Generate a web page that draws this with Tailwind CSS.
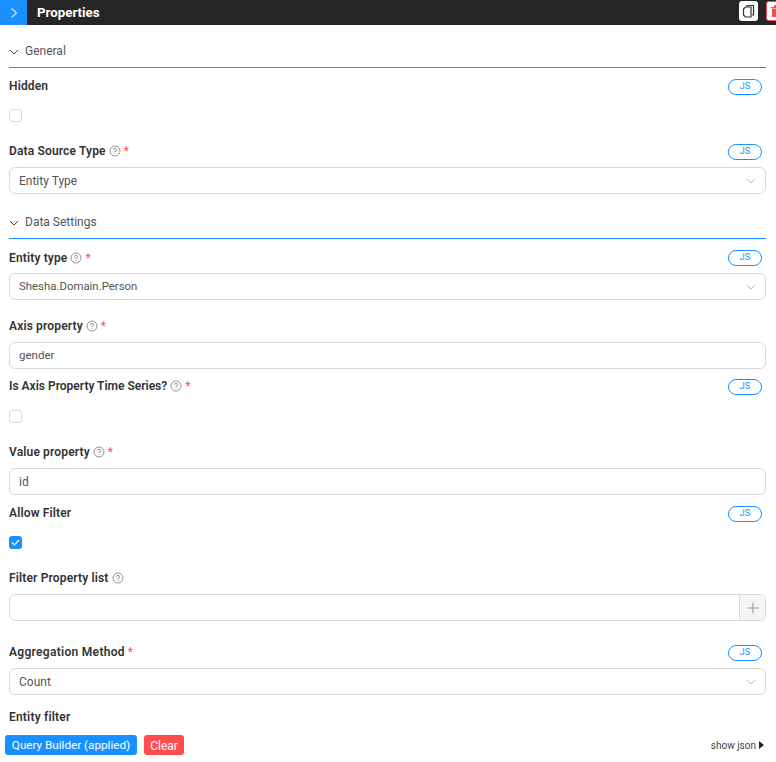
<!DOCTYPE html>
<html lang="en">

<head>
  <meta charset="UTF-8">
  <title>Properties</title>
  <script src="https://cdn.jsdelivr.net/npm/@tailwindcss/browser@4"></script>
</head>

<body class="bg-white h-[762px] w-[776px] overflow-hidden font-['Roboto','Noto_Sans',sans-serif] text-[12px] text-[#333]">
  <!-- Header -->
  <div class="h-[25px] bg-[#262626] flex items-center relative">
    <div class="w-[27px] h-[25px] bg-[#1890ff] flex items-center justify-center">
      <svg width="10" height="12" viewBox="0 0 10 12" fill="none" stroke="#cfe6ff" stroke-width="1.3"><path d="M2.500 1.500 7.500 6 2.500 10.500" /></svg>
    </div>
    <span class="ml-[10px] text-white font-bold text-[13.3px]">Properties</span>
    <div class="ml-auto flex gap-[8px] w-[37px] overflow-hidden shrink-0 self-start pt-px">
      <div class="w-[19px] h-[20px] shrink-0 bg-white rounded-[3px] flex items-center justify-center">
        <svg width="13" height="14" viewBox="0 0 13 14" fill="none" stroke="#333" stroke-width="1.2"><path d="M5 3V1.500h6.500v9.500H10M1.500 5 3.500 3h5.500v10H3.500L1.500 11z" /></svg>
      </div>
      <div class="w-[19px] h-[20px] shrink-0 bg-white border border-[#ff4d4f] rounded-[3px] flex items-center justify-center">
        <svg width="12" height="14" viewBox="0 0 12 14" fill="#ff4d4f"><path d="M1 3h10v1.500H1zM4 1h4v2H4zM2 5h8v8H2z" /></svg>
      </div>
    </div>
  </div>

  <div class="pl-[9px] pr-[10px]">
    <!-- General -->
    <div class="h-[43px] border-b border-[#3b8ad9] flex items-end gap-[6px] text-[#555] pb-[7px]">
      <svg class="mb-[3px]" width="10" height="10" viewBox="0 0 10 10" fill="none" stroke="#444" stroke-width="1"><path d="M1 3 5 7 9 3" /></svg>
      <span>General</span>
    </div>

    <div class="mt-[10px] h-[16px] flex items-center justify-between">
      <span class="font-semibold tracking-[0.15px]">Hidden</span>
      <span class="mr-[4px] translate-y-px w-[34px] h-[16px] rounded-full border-[1.5px] border-[#1890ff] text-[#1890ff] text-[9px] flex items-center justify-center">JS</span>
    </div>
    <div class="mt-[15px] w-[13px] h-[13px] border border-[#d9d9d9] rounded-[3px]"></div>

    <div class="mt-[21px] h-[16px] flex items-center justify-between">
      <span class="flex items-center font-semibold tracking-[0.15px]">Data Source Type
        <svg class="ml-[3px]" width="12" height="12" viewBox="0 0 12 12" fill="none" stroke="#777" stroke-width="0.8"><circle cx="6" cy="6" r="5" /><path d="M4.500 4.800A1.500 1.500 0 1 1 6 6.300V7.200M6 8.200V9" /></svg>
        <span class="ml-[3px] text-[#ff4d4f] font-normal">*</span></span>
      <span class="mr-[4px] translate-y-px w-[34px] h-[16px] rounded-full border-[1.5px] border-[#1890ff] text-[#1890ff] text-[9px] flex items-center justify-center">JS</span>
    </div>
    <div class="mt-[8px] h-[27px] border border-[#d9d9d9] rounded-[6px] flex items-center justify-between pl-[9px] pr-[9px] text-[#555]">
      <span>Entity Type</span>
      <svg width="10" height="10" viewBox="0 0 10 10" fill="none" stroke="#bbb" stroke-width="1"><path d="M1 3 5 7 9 3" /></svg>
    </div>

    <!-- Data Settings -->
    <div class="h-[45px] border-b border-[#1890ff] flex items-end gap-[6px] text-[#555] pb-[7px]">
      <svg class="mb-[3px]" width="10" height="10" viewBox="0 0 10 10" fill="none" stroke="#444" stroke-width="1"><path d="M1 3 5 7 9 3" /></svg>
      <span>Data Settings</span>
    </div>

    <div class="mt-[11px] h-[16px] flex items-center justify-between">
      <span class="flex items-center font-semibold tracking-[0.15px]">Entity type
        <svg class="ml-[3px]" width="12" height="12" viewBox="0 0 12 12" fill="none" stroke="#777" stroke-width="0.8"><circle cx="6" cy="6" r="5" /><path d="M4.500 4.800A1.500 1.500 0 1 1 6 6.300V7.200M6 8.200V9" /></svg>
        <span class="ml-[3px] text-[#ff4d4f] font-normal">*</span></span>
      <span class="mr-[4px] w-[34px] h-[16px] rounded-full border-[1.5px] border-[#1890ff] text-[#1890ff] text-[9px] flex items-center justify-center">JS</span>
    </div>
    <div class="mt-[7px] h-[27px] border border-[#d9d9d9] rounded-[6px] flex items-center justify-between pl-[9px] pr-[9px] text-[#555]">
      <span class="text-[11.4px]">Shesha.Domain.Person</span>
      <svg width="10" height="10" viewBox="0 0 10 10" fill="none" stroke="#bbb" stroke-width="1"><path d="M1 3 5 7 9 3" /></svg>
    </div>

    <div class="mt-[18px] h-[16px] flex items-center">
      <span class="flex items-center font-semibold tracking-[0.15px]">Axis property
        <svg class="ml-[3px]" width="12" height="12" viewBox="0 0 12 12" fill="none" stroke="#777" stroke-width="0.8"><circle cx="6" cy="6" r="5" /><path d="M4.500 4.800A1.500 1.500 0 1 1 6 6.300V7.200M6 8.200V9" /></svg>
        <span class="ml-[3px] text-[#ff4d4f] font-normal">*</span></span>
    </div>
    <div class="mt-[8px] h-[27px] border border-[#d9d9d9] rounded-[6px] flex items-center pl-[9px] text-[#555] text-[11.5px]">gender</div>

    <div class="mt-[9px] h-[16px] flex items-center justify-between">
      <span class="flex items-center font-semibold">Is Axis Property Time Series?
        <svg class="ml-[3px]" width="12" height="12" viewBox="0 0 12 12" fill="none" stroke="#777" stroke-width="0.8"><circle cx="6" cy="6" r="5" /><path d="M4.500 4.800A1.500 1.500 0 1 1 6 6.300V7.200M6 8.200V9" /></svg>
        <span class="ml-[3px] text-[#ff4d4f] font-normal">*</span></span>
      <span class="mr-[4px] translate-y-px w-[34px] h-[16px] rounded-full border-[1.5px] border-[#1890ff] text-[#1890ff] text-[9px] flex items-center justify-center">JS</span>
    </div>
    <div class="mt-[16px] w-[13px] h-[13px] border border-[#d9d9d9] rounded-[3px]"></div>

    <div class="mt-[21px] h-[16px] flex items-center">
      <span class="flex items-center font-semibold tracking-[0.15px]">Value property
        <svg class="ml-[3px]" width="12" height="12" viewBox="0 0 12 12" fill="none" stroke="#777" stroke-width="0.8"><circle cx="6" cy="6" r="5" /><path d="M4.500 4.800A1.500 1.500 0 1 1 6 6.300V7.200M6 8.200V9" /></svg>
        <span class="ml-[3px] text-[#ff4d4f] font-normal">*</span></span>
    </div>
    <div class="mt-[8px] h-[27px] border border-[#d9d9d9] rounded-[6px] flex items-center pl-[9px] text-[#555]">id</div>

    <div class="mt-[10px] h-[16px] flex items-center justify-between">
      <span class="font-semibold tracking-[0.15px]">Allow Filter</span>
      <span class="mr-[4px] translate-y-px w-[34px] h-[16px] rounded-full border-[1.5px] border-[#1890ff] text-[#1890ff] text-[9px] flex items-center justify-center">JS</span>
    </div>
    <div class="mt-[15px] w-[13px] h-[13px] bg-[#1890ff] rounded-[3px] flex items-center justify-center">
      <svg width="9" height="9" viewBox="0 0 9 9" fill="none" stroke="#fff" stroke-width="1.200"><path d="M1 4.500 3.500 7 8 2" /></svg>
    </div>

    <div class="mt-[21px] h-[16px] flex items-center">
      <span class="flex items-center font-semibold tracking-[0.15px]">Filter Property list
        <svg class="ml-[3px]" width="12" height="12" viewBox="0 0 12 12" fill="none" stroke="#777" stroke-width="0.8"><circle cx="6" cy="6" r="5" /><path d="M4.500 4.800A1.500 1.500 0 1 1 6 6.300V7.200M6 8.200V9" /></svg>
      </span>
    </div>
    <div class="mt-[8px] h-[27px] border border-[#d9d9d9] rounded-[6px] flex justify-end overflow-hidden">
      <div class="w-[26px] bg-[#f5f5f5] border-l border-[#d9d9d9] flex items-center justify-center">
        <svg width="12" height="12" viewBox="0 0 12 12" fill="none" stroke="#999" stroke-width="1"><path d="M6 .5v11M.5 6h11" /></svg>
      </div>
    </div>

    <div class="mt-[23px] h-[16px] flex items-center justify-between">
      <span class="flex items-center font-semibold tracking-[0.3px]">Aggregation Method
        <span class="ml-[3px] text-[#ff4d4f] font-normal">*</span></span>
      <span class="mr-[4px] translate-y-px w-[34px] h-[16px] rounded-full border-[1.5px] border-[#1890ff] text-[#1890ff] text-[9px] flex items-center justify-center">JS</span>
    </div>
    <div class="mt-[8px] h-[27px] border border-[#d9d9d9] rounded-[6px] flex items-center justify-between pl-[9px] pr-[9px] text-[#555]">
      <span>Count</span>
      <svg width="10" height="10" viewBox="0 0 10 10" fill="none" stroke="#bbb" stroke-width="1"><path d="M1 3 5 7 9 3" /></svg>
    </div>

    <div class="mt-[14px] h-[16px] flex items-center font-semibold tracking-[0.2px]">Entity filter</div>

    <!-- Query builder -->
    <div class="mt-[10px] -ml-[4px] -mr-[10px] pr-[12px] flex items-center">
      <span class="h-[20px] w-[132px] pt-[2px] bg-[#1890ff] text-white rounded-[3px] flex items-center justify-center text-[11.7px]">Query Builder (applied)</span>
      <span class="ml-[7px] h-[20px] w-[40px] pt-[2px] bg-[#ff4d4f] text-white rounded-[3px] flex items-center justify-center">Clear</span>
      <span class="ml-auto flex items-center gap-[3px] text-[10px] text-[#444]">show json
        <svg width="5" height="8" viewBox="0 0 5 8" fill="#222"><path d="M0 0 5 4 0 8z" /></svg>
      </span>
    </div>
  </div>
</body>

</html>
